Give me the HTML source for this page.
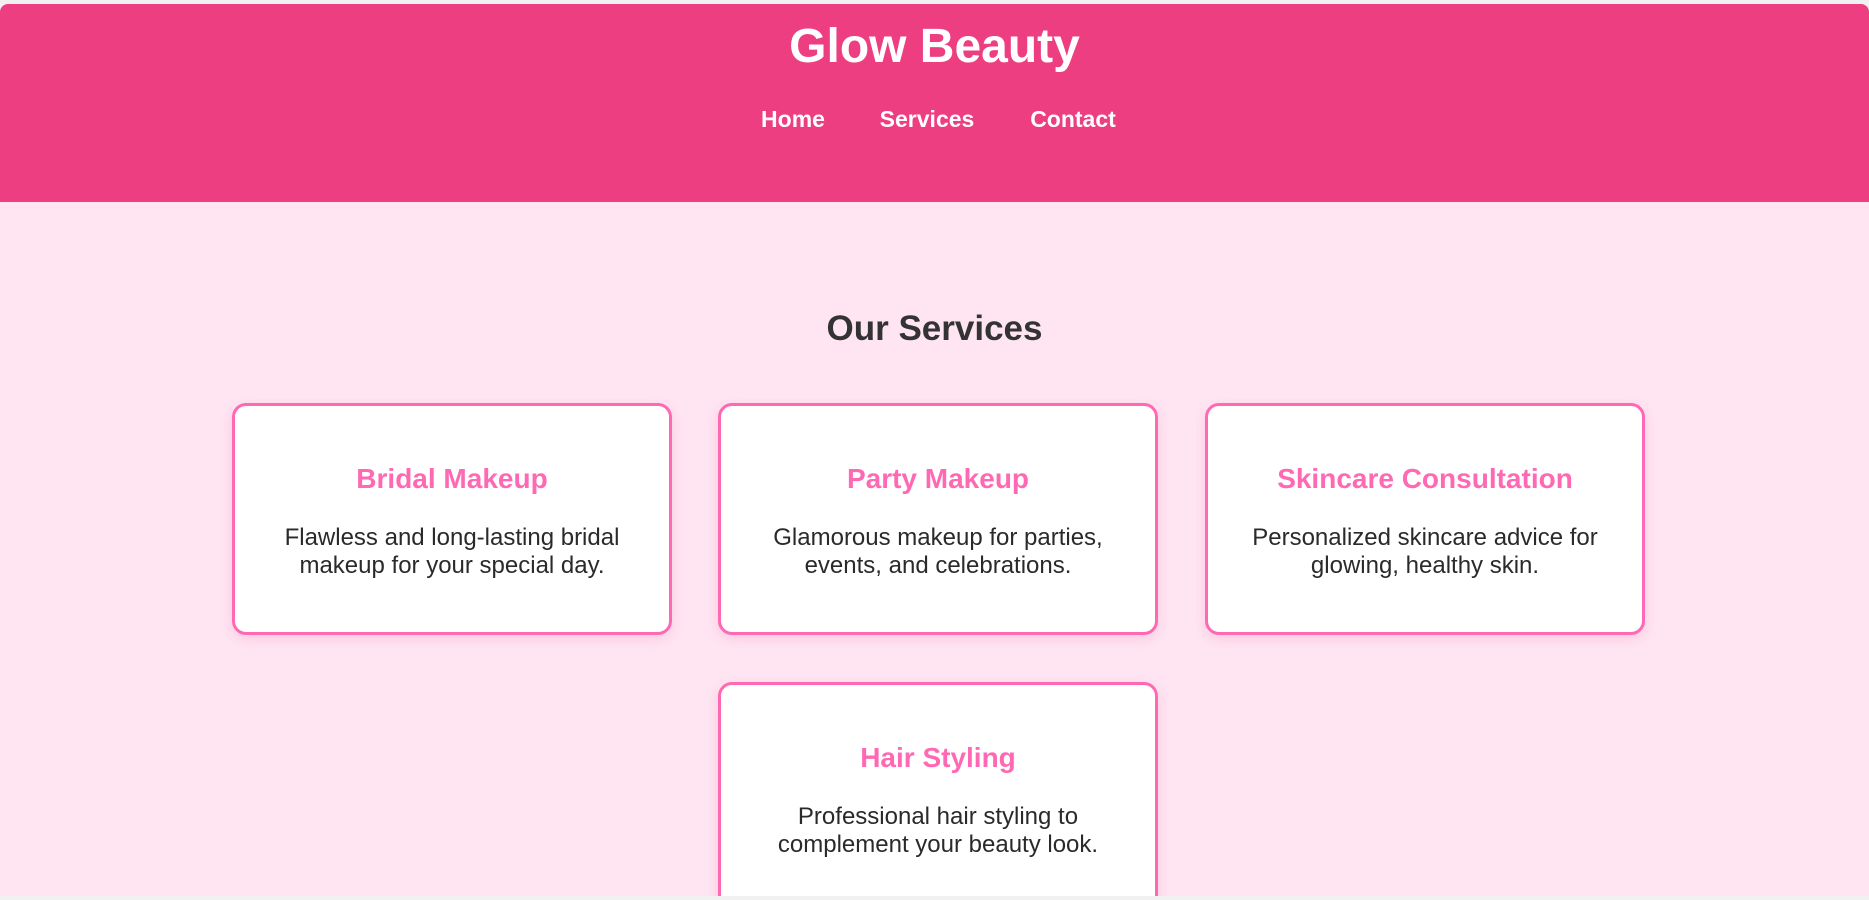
<!DOCTYPE html>
<html><head><meta charset="utf-8"><style>
html,body{margin:0;padding:0;}
body{width:1869px;height:900px;background:#f1f1f1;font-family:"Liberation Sans",Arial,sans-serif;position:relative;overflow:hidden;}
.page{position:absolute;left:0;top:4px;width:1869px;height:892px;background:#ffe5f2;border-radius:8px 8px 0 0;overflow:hidden;}
header{position:absolute;left:0;top:0;width:1869px;height:198px;background:#ec3e80;}
h1{position:absolute;left:0;width:1869px;top:15px;margin:0;text-align:center;color:#fff;font-size:48px;font-weight:bold;line-height:56px;}
nav a{position:absolute;top:102px;color:#fff;font-weight:bold;font-size:23px;text-decoration:none;transform:translateX(-50%);white-space:nowrap;}
h2{position:absolute;left:0;width:1869px;top:304px;margin:0;text-align:center;color:#333;font-size:35px;line-height:42px;}
.card{position:absolute;width:434px;height:226px;background:#fff;border:3px solid #ff69b4;border-radius:14px;box-shadow:0 4px 12px rgba(230,120,170,0.25);text-align:center;}
.card h3{margin:0;position:absolute;top:57px;left:0;width:100%;color:#ff69b4;font-size:28px;line-height:32px;}
.card p{margin:0;position:absolute;top:118px;left:20px;right:20px;color:#2a2a2a;font-size:24px;line-height:28px;}
</style></head><body>
<div class="page">
<header>
<h1>Glow Beauty</h1>
<nav><a style="left:793px">Home</a><a style="left:927px">Services</a><a style="left:1073px">Contact</a></nav>
</header>
<h2>Our Services</h2>
<div class="card" style="left:232px;top:399px"><h3>Bridal Makeup</h3><p>Flawless and long-lasting bridal<br>makeup for your special day.</p></div>
<div class="card" style="left:718px;top:399px"><h3>Party Makeup</h3><p>Glamorous makeup for parties,<br>events, and celebrations.</p></div>
<div class="card" style="left:1205px;top:399px"><h3>Skincare Consultation</h3><p>Personalized skincare advice for<br>glowing, healthy skin.</p></div>
<div class="card" style="left:718px;top:678px"><h3>Hair Styling</h3><p>Professional hair styling to<br>complement your beauty look.</p></div>
</div>
</body></html>
